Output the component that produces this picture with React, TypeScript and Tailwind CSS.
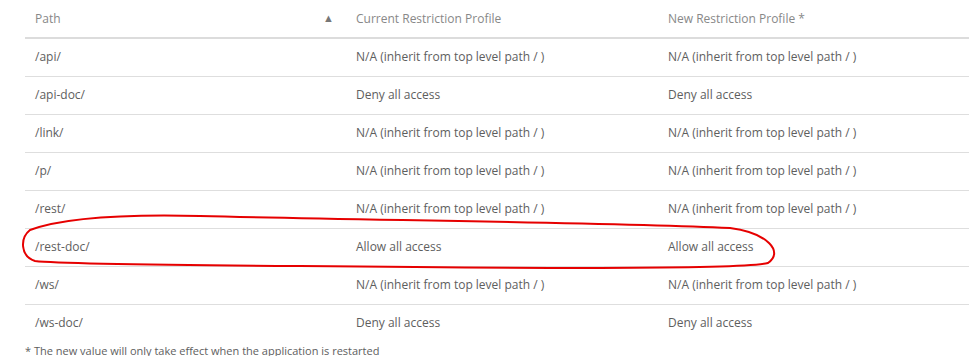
import React from "react";

const rows: [string, string, string][] = [
  ["/api/", "N/A (inherit from top level path / )", "N/A (inherit from top level path / )"],
  ["/api-doc/", "Deny all access", "Deny all access"],
  ["/link/", "N/A (inherit from top level path / )", "N/A (inherit from top level path / )"],
  ["/p/", "N/A (inherit from top level path / )", "N/A (inherit from top level path / )"],
  ["/rest/", "N/A (inherit from top level path / )", "N/A (inherit from top level path / )"],
  ["/rest-doc/", "Allow all access", "Allow all access"],
  ["/ws/", "N/A (inherit from top level path / )", "N/A (inherit from top level path / )"],
  ["/ws-doc/", "Deny all access", "Deny all access"],
];

export default function App() {
  return (
    <div
      className="relative w-[974px] h-[356px] overflow-hidden bg-white text-[#5e5e5e]"
      style={{ fontFamily: '"Open Sans", sans-serif' }}
    >
      <div className="pl-[25px] pr-[5px]">
        <table className="w-full border-collapse text-[12px]">
          <thead>
            <tr className="border-b-2 border-[#dcdcdc] h-[38px]">
              <th className="w-[321px] pl-[10px] pr-[12px] font-normal text-left text-[#888]">
                <div className="flex items-center justify-between">
                  <span>Path</span>
                  <span className="text-[11px] text-[#777]">▲</span>
                </div>
              </th>
              <th className="w-[312px] pl-[10px] font-normal text-left text-[#888]">Current Restriction Profile</th>
              <th className="pl-[10px] font-normal text-left text-[#888]">New Restriction Profile *</th>
            </tr>
          </thead>
          <tbody>
            {rows.map((r, i) => (
              <tr
                key={r[0]}
                className={i < rows.length - 1 ? "h-[38px] border-b border-[#dedede]" : "h-[38px]"}
              >
                <td className="pl-[10px]">{r[0]}</td>
                <td className="pl-[10px]">{r[1]}</td>
                <td className="pl-[10px]">{r[2]}</td>
              </tr>
            ))}
          </tbody>
        </table>
        <div className="text-[11px] mt-[1px] leading-[16px]">* The new value will only take effect when the application is restarted</div>
      </div>
      <svg className="absolute left-0 top-0 pointer-events-none" width="974" height="356">
        <path
          d="M 30 230 C 60 219, 120 214, 200 216 C 350 220, 600 222, 730 228 C 768 233, 784 252, 768 263 C 745 270, 500 268, 300 266 C 150 265, 60 264, 35 261 C 20 256, 20 238, 30 230 Z"
          fill="none"
          stroke="#e60000"
          strokeWidth="2"
        />
      </svg>
    </div>
  );
}
